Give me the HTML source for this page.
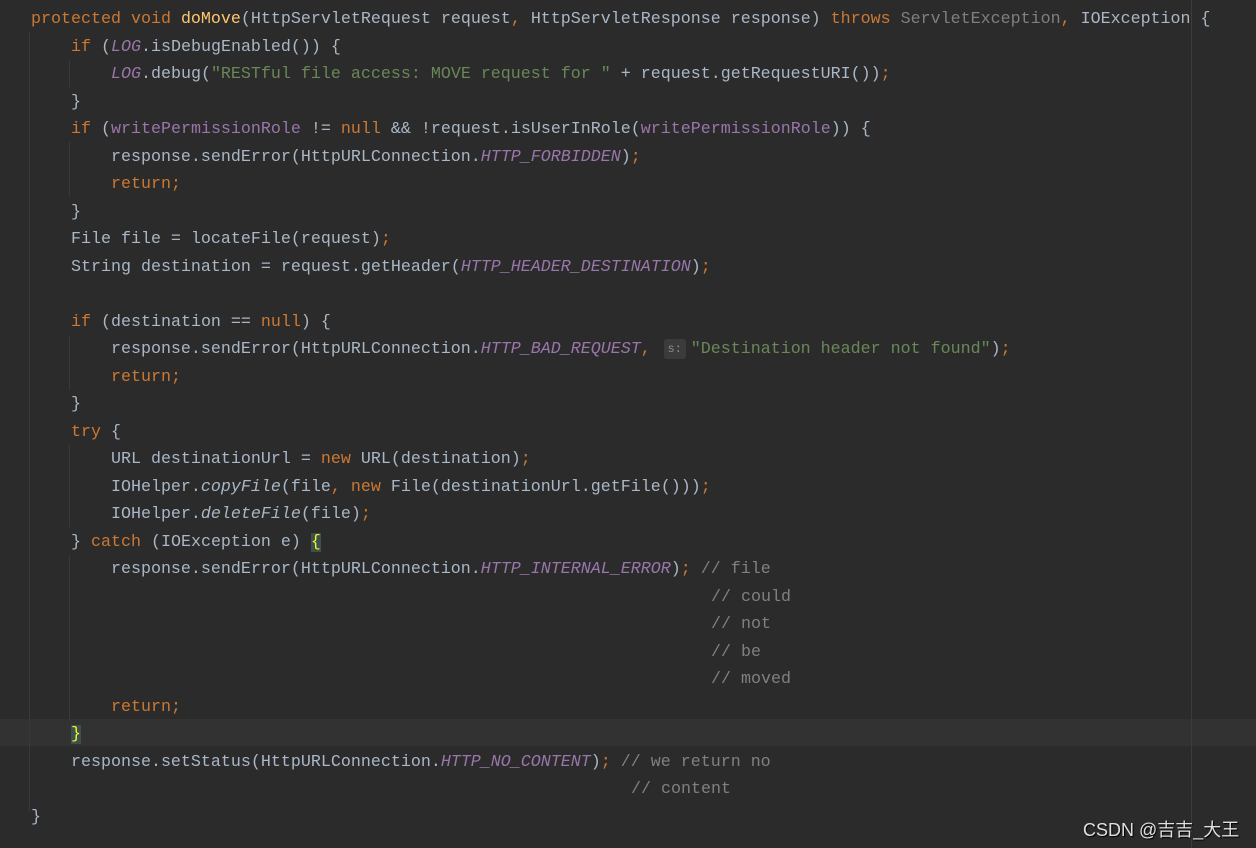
<!DOCTYPE html>
<html><head><meta charset="utf-8"><style>
html,body{margin:0;padding:0;}
body{width:1256px;height:848px;background:#2b2b2b;position:relative;overflow:hidden;font-family:"Liberation Mono",monospace;font-size:16.67px;color:#a9b7c6;}
.l{position:absolute;left:31px;height:27.5px;line-height:27.5px;white-space:pre;margin-top:2px}
.k{color:#cc7832}.s{color:#6a8759}.m{color:#ffc66d}.c{color:#808080}.f{color:#9876aa}.fi{color:#9876aa;font-style:italic}.i{font-style:italic}.g{color:#7f7f7f}
.hint{display:inline-block;width:22px;height:20px;line-height:20px;background:#3b3b3b;color:#8c8c8c;border-radius:3px;font-size:12px;text-align:center;margin:0 5px 0 3px;vertical-align:1px}
.br{background:#3b514d;color:#ffef28}
.guide{position:absolute;width:1px;background:#393939}
</style></head><body>
<div style="position:absolute;left:0;top:719px;width:1256px;height:27px;background:#323232"></div>
<div style="position:absolute;left:1191px;top:0;width:1px;height:848px;background:#3c3c3c"></div>
<div class="guide" style="left:29px;top:32px;height:779px"></div>
<div class="guide" style="left:69px;top:60px;height:27px"></div>
<div class="guide" style="left:69px;top:142px;height:55px"></div>
<div class="guide" style="left:69px;top:335px;height:55px"></div>
<div class="guide" style="left:69px;top:445px;height:82px"></div>
<div class="guide" style="left:69px;top:555px;height:165px"></div>
<div style="position:absolute;left:1083px;top:816px;font-family:'Liberation Sans','Noto Sans CJK SC',sans-serif;font-size:18px;color:#e0e0e0;text-shadow:1px 1px 1px #000">CSDN @吉吉_大王</div>
<div class="l" style="top:4px"><span class="k">protected void </span><span class="m">doMove</span>(HttpServletRequest request<span class="k">, </span>HttpServletResponse response) <span class="k">throws </span><span class="g">ServletException</span><span class="k">, </span>IOException {</div>
<div class="l" style="top:31.5px">    <span class="k">if </span>(<span class="fi">LOG</span>.isDebugEnabled()) {</div>
<div class="l" style="top:59px">        <span class="fi">LOG</span>.debug(<span class="s">"RESTful file access: MOVE request for " </span>+ request.getRequestURI())<span class="k">;</span></div>
<div class="l" style="top:86.5px">    }</div>
<div class="l" style="top:114px">    <span class="k">if </span>(<span class="f">writePermissionRole </span>!= <span class="k">null </span>&amp;&amp; !request.isUserInRole(<span class="f">writePermissionRole</span>)) {</div>
<div class="l" style="top:141.5px">        response.sendError(HttpURLConnection.<span class="fi">HTTP_FORBIDDEN</span>)<span class="k">;</span></div>
<div class="l" style="top:169px">        <span class="k">return;</span></div>
<div class="l" style="top:196.5px">    }</div>
<div class="l" style="top:224px">    File file = locateFile(request)<span class="k">;</span></div>
<div class="l" style="top:251.5px">    String destination = request.getHeader(<span class="fi">HTTP_HEADER_DESTINATION</span>)<span class="k">;</span></div>
<div class="l" style="top:306.5px">    <span class="k">if </span>(destination == <span class="k">null</span>) {</div>
<div class="l" style="top:334px">        response.sendError(HttpURLConnection.<span class="fi">HTTP_BAD_REQUEST</span><span class="k">, </span><span class="hint">s:</span><span class="s">"Destination header not found"</span>)<span class="k">;</span></div>
<div class="l" style="top:361.5px">        <span class="k">return;</span></div>
<div class="l" style="top:389px">    }</div>
<div class="l" style="top:416.5px">    <span class="k">try </span>{</div>
<div class="l" style="top:444px">        URL destinationUrl = <span class="k">new </span>URL(destination)<span class="k">;</span></div>
<div class="l" style="top:471.5px">        IOHelper.<span class="i">copyFile</span>(file<span class="k">, new </span>File(destinationUrl.getFile()))<span class="k">;</span></div>
<div class="l" style="top:499px">        IOHelper.<span class="i">deleteFile</span>(file)<span class="k">;</span></div>
<div class="l" style="top:526.5px">    } <span class="k">catch </span>(IOException e) <span class="br">{</span></div>
<div class="l" style="top:554px">        response.sendError(HttpURLConnection.<span class="fi">HTTP_INTERNAL_ERROR</span>)<span class="k">; </span><span class="c">// file</span></div>
<div class="l c" style="top:581.5px;left:711px">// could</div>
<div class="l c" style="top:609px;left:711px">// not</div>
<div class="l c" style="top:636.5px;left:711px">// be</div>
<div class="l c" style="top:664px;left:711px">// moved</div>
<div class="l" style="top:691.5px">        <span class="k">return;</span></div>
<div class="l" style="top:719px">    <span class="br">}</span></div>
<div class="l" style="top:746.5px">    response.setStatus(HttpURLConnection.<span class="fi">HTTP_NO_CONTENT</span>)<span class="k">; </span><span class="c">// we return no</span></div>
<div class="l c" style="top:774px;left:631px">// content</div>
<div class="l" style="top:801.5px">}</div>
</body></html>
